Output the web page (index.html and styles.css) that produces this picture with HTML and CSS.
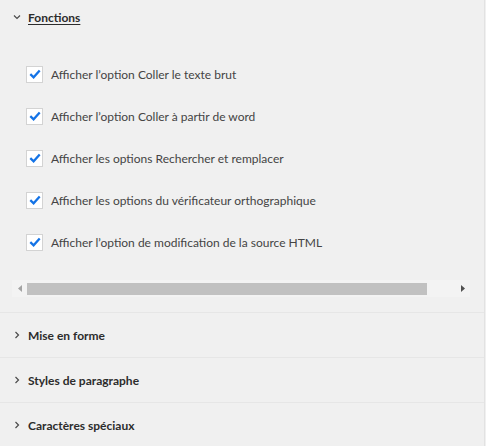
FILE: index.html
```html
<!DOCTYPE html>
<html lang="fr">
<head>
<meta charset="utf-8">
<title>Options</title>
<link rel="stylesheet" href="styles.css">
</head>
<body>
<div class="panel">
  <section class="acc acc-open">
    <div class="acc-head">
      <svg class="chev" width="8" height="8" viewBox="0 0 8 8"><path d="M1 2.5 L4 5.5 L7 2.5" fill="none" stroke="#4b4b4b" stroke-width="1.2"/></svg>
      <span class="acc-title acc-title-open">Fonctions</span>
    </div>
    <div class="acc-body">
      <ul class="opts">
        <li class="opt"><span class="cb"><svg width="14" height="14" viewBox="0 0 14 14"><path d="M2.3 7.2 L5.6 10.3 L11.7 3.6" fill="none" stroke="#1473e6" stroke-width="2.3"/></svg></span><span class="opt-label">Afficher l’option Coller le texte brut</span></li>
        <li class="opt"><span class="cb"><svg width="14" height="14" viewBox="0 0 14 14"><path d="M2.3 7.2 L5.6 10.3 L11.7 3.6" fill="none" stroke="#1473e6" stroke-width="2.3"/></svg></span><span class="opt-label">Afficher l’option Coller à partir de word</span></li>
        <li class="opt"><span class="cb"><svg width="14" height="14" viewBox="0 0 14 14"><path d="M2.3 7.2 L5.6 10.3 L11.7 3.6" fill="none" stroke="#1473e6" stroke-width="2.3"/></svg></span><span class="opt-label">Afficher les options Rechercher et remplacer</span></li>
        <li class="opt"><span class="cb"><svg width="14" height="14" viewBox="0 0 14 14"><path d="M2.3 7.2 L5.6 10.3 L11.7 3.6" fill="none" stroke="#1473e6" stroke-width="2.3"/></svg></span><span class="opt-label">Afficher les options du vérificateur orthographique</span></li>
        <li class="opt"><span class="cb"><svg width="14" height="14" viewBox="0 0 14 14"><path d="M2.3 7.2 L5.6 10.3 L11.7 3.6" fill="none" stroke="#1473e6" stroke-width="2.3"/></svg></span><span class="opt-label">Afficher l’option de modification de la source HTML</span></li>
      </ul>
      <div class="hscroll">
        <span class="hs-btn"><svg width="4" height="7" viewBox="0 0 4 7"><path d="M4 0 L0 3.5 L4 7 Z" fill="#a3a3a3"/></svg></span>
        <span class="hs-thumb"></span>
        <span class="hs-rest"></span>
        <span class="hs-btn"><svg width="4" height="7" viewBox="0 0 4 7"><path d="M0 0 L4 3.5 L0 7 Z" fill="#505050"/></svg></span>
      </div>
    </div>
  </section>
  <section class="acc">
    <div class="acc-head">
      <svg class="chev" width="8" height="8" viewBox="0 0 8 8"><path d="M2.5 1 L5.5 4 L2.5 7" fill="none" stroke="#4b4b4b" stroke-width="1.2"/></svg>
      <span class="acc-title">Mise en forme</span>
    </div>
  </section>
  <section class="acc">
    <div class="acc-head">
      <svg class="chev" width="8" height="8" viewBox="0 0 8 8"><path d="M2.5 1 L5.5 4 L2.5 7" fill="none" stroke="#4b4b4b" stroke-width="1.2"/></svg>
      <span class="acc-title">Styles de paragraphe</span>
    </div>
  </section>
  <section class="acc">
    <div class="acc-head">
      <svg class="chev" width="8" height="8" viewBox="0 0 8 8"><path d="M2.5 1 L5.5 4 L2.5 7" fill="none" stroke="#4b4b4b" stroke-width="1.2"/></svg>
      <span class="acc-title">Caractères spéciaux</span>
    </div>
  </section>
</div>
</body>
</html>
```
FILE: styles.css
```css
html, body {
  margin: 0;
  padding: 0;
  background: #f0f0f0;
}
body {
  font-family: Lato, "Noto Sans", sans-serif;
  color: #4b4b4b;
}
.panel {
  width: 484px;
  height: 446px;
  border-right: 1px solid #e2e2e2;
  display: flex;
  flex-direction: column;
}
.acc {
  border-top: 1px solid #e6e6e6;
}
.acc-open {
  border-top: none;
}
.acc-head {
  height: 44px;
  display: flex;
  align-items: center;
  padding-left: 13px;
  gap: 7px;
}
.acc-open .acc-head {
  height: 34px;
}
.chev {
  flex: none;
}
.acc-title {
  font-size: 12px;
  font-weight: 700;
  color: #2c2c2c;
}
.acc-title-open {
  text-decoration: underline;
  text-underline-offset: 2px;
}
.acc-body {
  padding: 19px 0 15px 0;
}
.opts {
  list-style: none;
  margin: 0;
  padding: 0;
}
.opt {
  height: 42px;
  display: flex;
  align-items: center;
  padding-left: 26px;
  gap: 8px;
}
.cb {
  width: 15px;
  height: 15px;
  border: 1px solid #d3d3d3;
  background: #fff;
  display: flex;
  align-items: center;
  justify-content: center;
  flex: none;
}
.opt-label {
  font-size: 12px;
  color: #444444;
}
.hscroll {
  margin: 17px 14px 0 12px;
  height: 17px;
  display: flex;
  align-items: center;
  background: #f3f3f3;
}
.hs-btn {
  width: 15px;
  height: 17px;
  display: flex;
  align-items: center;
  justify-content: center;
  flex: none;
}
.hs-thumb {
  width: 400px;
  height: 12px;
  background: #c1c1c1;
  flex: none;
}
.hs-rest {
  flex: 1;
}
```
